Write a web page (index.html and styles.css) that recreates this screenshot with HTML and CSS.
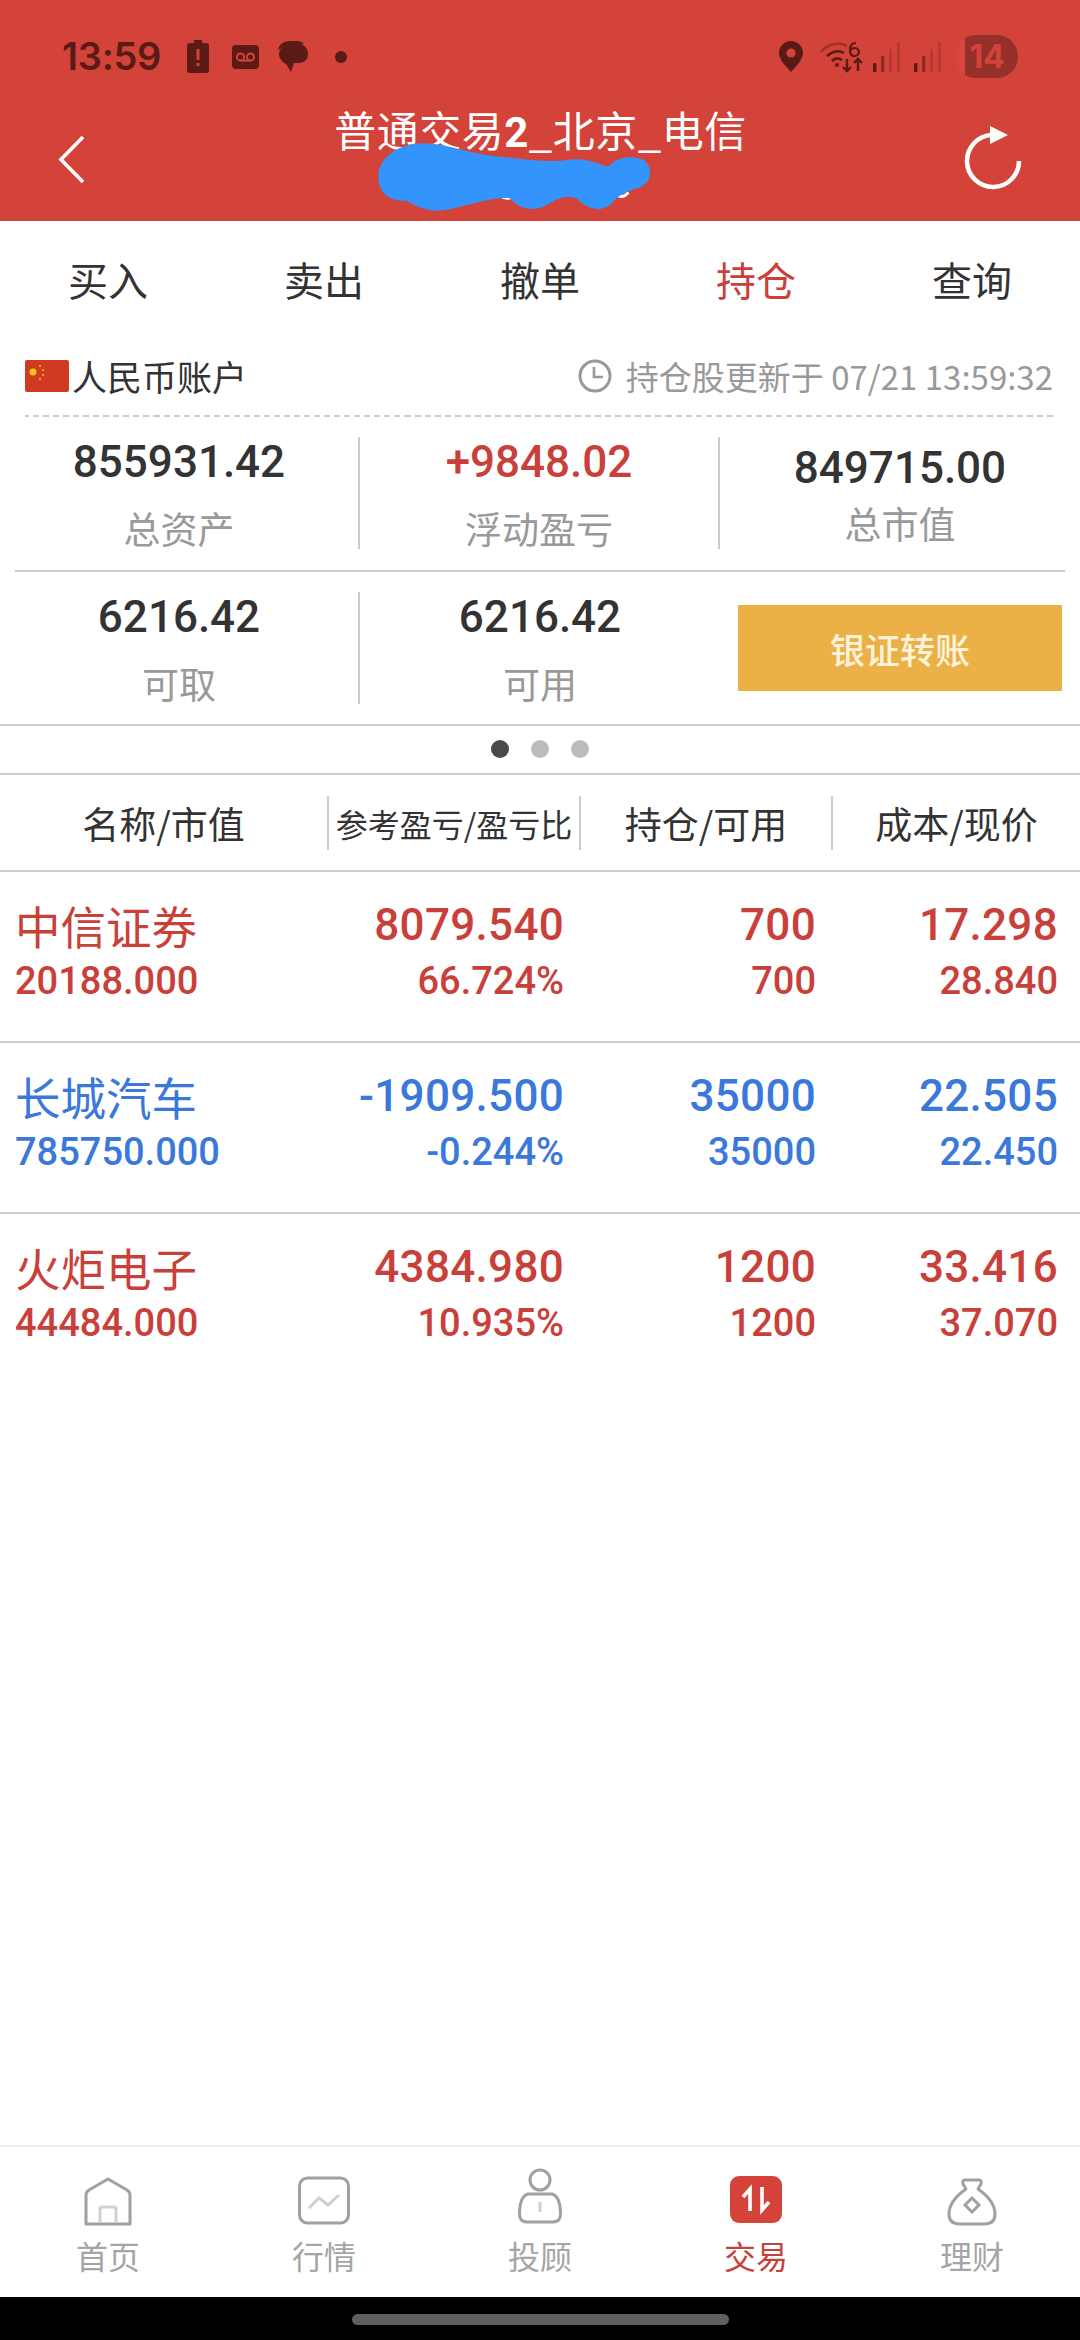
FILE: index.html
```html
<!DOCTYPE html>
<html lang="zh">
<head>
<meta charset="utf-8">
<title>持仓</title>
<link rel="stylesheet" href="styles.css">
</head>
<body>
<div class="app">
  <header class="top">
    <div class="status">
      <div class="status-left">
        <span class="time">13:59</span>
        <svg class="i-batt" viewBox="0 0 22 33"><path d="M7 0h8v3h4a3 3 0 0 1 3 3v24a3 3 0 0 1-3 3H3a3 3 0 0 1-3-3V6a3 3 0 0 1 3-3h4z" fill="#5a1a15"/><rect x="9.500" y="9" width="3" height="11" fill="#d34339"/><rect x="9.500" y="23" width="3" height="3" fill="#d34339"/></svg>
        <svg class="i-vm" viewBox="0 0 27 24"><rect width="27" height="24" rx="4" fill="#5a1a15"/><circle cx="8.500" cy="12" r="3.600" fill="none" stroke="#d34339" stroke-width="2"/><circle cx="18.500" cy="12" r="3.600" fill="none" stroke="#d34339" stroke-width="2"/><rect x="8.500" y="14.600" width="10" height="2" fill="#d34339"/></svg>
        <svg class="i-chat" viewBox="0 0 31 31"><path d="M1 9C2 3 7 0 14 0h6c3 0 5 1 7 3L8 5z" fill="#5a1a15"/><path d="M14 3h7c6 0 10 4 10 10s-4 9-10 9h-4l-3 9-5-8C5 21 2 17 2 13 2 7 8 3 14 3z" fill="#5a1a15"/></svg>
        <span class="dot-s"></span>
      </div>
      <div class="status-right">
        <svg class="i-pin" viewBox="0 0 24 31"><path d="M12 0a12 12 0 0 1 12 12c0 7-7 13-12 19C7 25 0 19 0 12A12 12 0 0 1 12 0z" fill="#5a1a15"/><circle cx="12" cy="12" r="4.600" fill="#d34339"/></svg>
        <svg class="i-wifi" viewBox="0 0 44 32"><path d="M1 11C8 2 20 1 27 5" fill="none" stroke="#a53028" stroke-width="2.600"/><path d="M7 15c5-5 12-6 17-3" fill="none" stroke="#5a1a15" stroke-width="2.600"/><path d="M12 20c3-3 7-3 10-1" fill="none" stroke="#5a1a15" stroke-width="2.600"/><circle cx="17" cy="24" r="2" fill="#5a1a15"/><path d="M27 18v12m-4-4 4 4 4-4M38 30V18m-4 4 4-4 4 4" fill="none" stroke="#5a1a15" stroke-width="2.400"/><path d="M36 2c-4 0-6 3-6 7s1 6 4 6 5-2 5-4-2-4-4-4-4 1-5 3" fill="none" stroke="#5a1a15" stroke-width="2.200"/></svg>
        <svg class="i-sig" viewBox="0 0 27 30"><rect x="0" y="21" width="3.400" height="9" rx="1" fill="#5a1a15"/><rect x="8" y="14" width="3.400" height="16" rx="1" fill="#8c2a23"/><rect x="16" y="7" width="3" height="23" fill="#b53a31"/><rect x="24" y="0" width="3" height="30" fill="#b53a31"/></svg>
        <svg class="i-sig" viewBox="0 0 27 30"><rect x="0" y="21" width="3.400" height="9" rx="1" fill="#5a1a15"/><rect x="8" y="14" width="3.400" height="16" rx="1" fill="#8c2a23"/><rect x="16" y="7" width="3" height="23" fill="#b53a31"/><rect x="24" y="0" width="3" height="30" fill="#b53a31"/></svg>
        <span class="badge">14</span>
      </div>
    </div>
    <div class="titlebar">
      <svg class="i-back" viewBox="0 0 27 49"><path d="M25 2 3 24.500 25 47" fill="none" stroke="#fff" stroke-width="3.600"/></svg>
      <div class="title">普通交易<b>2</b>_北京_电信</div>
      <svg class="i-refresh" viewBox="0 0 60 66"><path d="M29 9A26 26 0 1 0 56 35" fill="none" stroke="#fff" stroke-width="4.500"/><path d="M27 0 45 9 27 18z" fill="#fff"/></svg>
    </div>
    <svg class="scribble" viewBox="0 0 960 330"><path d="M420 258q20 12 40 2M770 255q20 12 35-8" fill="none" stroke="#fff" stroke-width="9"/><path d="M55 200C55 140 120 100 190 100 260 100 320 130 400 138 480 145 560 160 620 150 680 140 720 165 745 170 770 140 820 135 850 150 880 170 880 220 830 235 800 245 770 260 760 275 730 310 680 300 650 265 620 255 590 265 560 285 520 305 480 300 450 265 400 260 330 285 270 298 210 310 170 290 140 272 90 275 55 250 55 200Z" fill="#3394fb"/></svg>
  </header>

  <nav class="tabs">
    <span class="tab">买入</span>
    <span class="tab">卖出</span>
    <span class="tab">撤单</span>
    <span class="tab tab-on">持仓</span>
    <span class="tab">查询</span>
  </nav>

  <section class="account">
    <div class="acc-left">
      <svg class="flag" viewBox="0 0 44 32"><rect width="44" height="32" rx="2" fill="#d03a20"/><circle cx="8" cy="12" r="3.500" fill="#f5c518"/><circle cx="15" cy="6" r="1" fill="#f5c518"/><circle cx="18" cy="10" r="1" fill="#f5c518"/><circle cx="18" cy="15" r="1" fill="#f5c518"/><circle cx="15" cy="19" r="1" fill="#f5c518"/></svg>
      <span>人民币账户</span>
    </div>
    <div class="acc-right">
      <svg class="clock" viewBox="0 0 34 34"><circle cx="17" cy="17" r="15" fill="none" stroke="#999" stroke-width="3"/><path d="M16 8v10h9" fill="none" stroke="#999" stroke-width="2.600"/></svg>
      <span>持仓股更新于 07/21 13:59:32</span>
    </div>
  </section>

  <section class="stats">
    <div class="stat-row">
      <div class="cell cell-line"><span class="num">855931.42</span><span class="lab">总资产</span></div>
      <div class="cell cell-line"><span class="num up">+9848.02</span><span class="lab">浮动盈亏</span></div>
      <div class="cell cell-tight"><span class="num">849715.00</span><span class="lab">总市值</span></div>
    </div>
    <div class="rule"></div>
    <div class="stat-row">
      <div class="cell cell-line"><span class="num">6216.42</span><span class="lab">可取</span></div>
      <div class="cell"><span class="num">6216.42</span><span class="lab">可用</span></div>
      <div class="cell cell-btn"><span class="btn">银证转账</span></div>
    </div>
  </section>

  <div class="dots"><i class="d d-on"></i><i class="d"></i><i class="d"></i></div>

  <div class="thead">
    <span class="th th-line">名称/市值</span>
    <span class="th th-line th-sm">参考盈亏/盈亏比</span>
    <span class="th th-line">持仓/可用</span>
    <span class="th">成本/现价</span>
  </div>

  <div class="row up">
    <div class="c c-name"><span class="big cjk">中信证券</span><span class="small">20188.000</span></div>
    <div class="c c2"><span class="big">8079.540</span><span class="small">66.724%</span></div>
    <div class="c c3"><span class="big">700</span><span class="small">700</span></div>
    <div class="c c4"><span class="big">17.298</span><span class="small">28.840</span></div>
  </div>
  <div class="row down">
    <div class="c c-name"><span class="big cjk">长城汽车</span><span class="small">785750.000</span></div>
    <div class="c c2"><span class="big">-1909.500</span><span class="small">-0.244%</span></div>
    <div class="c c3"><span class="big">35000</span><span class="small">35000</span></div>
    <div class="c c4"><span class="big">22.505</span><span class="small">22.450</span></div>
  </div>
  <div class="row up row-last">
    <div class="c c-name"><span class="big cjk">火炬电子</span><span class="small">44484.000</span></div>
    <div class="c c2"><span class="big">4384.980</span><span class="small">10.935%</span></div>
    <div class="c c3"><span class="big">1200</span><span class="small">1200</span></div>
    <div class="c c4"><span class="big">33.416</span><span class="small">37.070</span></div>
  </div>

  <div class="spacer"></div>

  <footer class="nav">
    <div class="nav-item">
      <svg class="nav-ic" viewBox="0 0 52 52"><path d="M4 49V20q0-3 3-5L26 4l19 11q3 2 3 5v29z" fill="none" stroke="#a0a0a0" stroke-width="3" stroke-linejoin="round"/><path d="M18 48V34q0-2 2-2h12q2 0 2 2v14" fill="none" stroke="#d2d2d2" stroke-width="3"/></svg>
      <span>首页</span>
    </div>
    <div class="nav-item">
      <svg class="nav-ic" viewBox="0 0 52 52"><rect x="1.500" y="3" width="49" height="45" rx="8" fill="none" stroke="#a0a0a0" stroke-width="3"/><path d="M11 33l10-10 9 7 11-10" fill="none" stroke="#cfcfcf" stroke-width="3"/></svg>
      <span>行情</span>
    </div>
    <div class="nav-item">
      <svg class="nav-ic" viewBox="0 0 52 52"><circle cx="26" cy="5" r="10" fill="none" stroke="#a0a0a0" stroke-width="3"/><path d="M14 19H38Q46 21 46.500 38 47 47 39 47H13Q5 47 5.500 38 6 21 14 19Z" fill="#fff" stroke="#a0a0a0" stroke-width="3"/><path d="M26 27v10" stroke="#cfcfcf" stroke-width="3"/></svg>
      <span>投顾</span>
    </div>
    <div class="nav-item nav-on">
      <svg class="nav-ic" viewBox="0 0 52 52"><rect y="1" width="52" height="47" rx="9" fill="#d4423a"/><path d="M20 36V14l-7 8M32 12v23l7-8" fill="none" stroke="#fff" stroke-width="3.600"/></svg>
      <span>交易</span>
    </div>
    <div class="nav-item">
      <svg class="nav-ic" viewBox="0 0 52 52"><path d="M19 5h14q3 0 2 4l-3 5q17 12 17 25 0 10-11 10H14Q3 49 3 39q0-13 17-25l-3-5q-1-4 2-4z" fill="none" stroke="#a0a0a0" stroke-width="3" stroke-linejoin="round"/><path d="M26 23l7 7-7 7-7-7z" fill="none" stroke="#a0a0a0" stroke-width="3"/></svg>
      <span>理财</span>
    </div>
  </footer>
  <div class="gesture"><span class="pill"></span></div>
</div>
</body>
</html>
```
FILE: styles.css
```css
* { box-sizing: border-box; }
html, body { margin: 0; padding: 0; background: #fff; }
body { font-family: "Noto Sans CJK SC", "Noto Sans", sans-serif; color: #333; }
.app { width: 1080px; height: 2340px; display: flex; flex-direction: column; overflow: hidden; }

.top { position: relative; height: 221px; background: #d34339; flex: none; }
.status { height: 112px; padding: 35px 62px 0 62px; display: flex; justify-content: space-between; align-items: flex-start; }
.status-left, .status-right { display: flex; align-items: center; height: 43px; }
.time { font: 600 38px/43px Inter, Roboto, sans-serif; color: #5a1a15; width: 125px; letter-spacing: -.3px; }
.i-batt { width: 22px; height: 33px; margin-right: 23px; }
.i-vm { width: 27px; height: 24px; margin-right: 18px; }
.i-chat { width: 31px; height: 31px; margin-right: 27px; }
.dot-s { width: 12px; height: 12px; border-radius: 50%; background: #5a1a15; }
.i-pin { width: 24px; height: 31px; margin-right: 17px; }
.i-wifi { width: 44px; height: 32px; margin-right: 9px; }
.i-sig { width: 27px; height: 30px; margin-right: 14px; }
.badge { width: 63px; height: 43px; border-radius: 21px; background: linear-gradient(90deg, #d9473c 10px, #96302a 10px); color: #d34339; font: 700 32px/43px Inter, Roboto, sans-serif; text-align: right; padding-right: 13px; }
.titlebar { height: 109px; display: grid; grid-template-columns: 1fr auto 1fr; align-items: start; padding: 0 57px 0 58px; }
.i-back { width: 27px; height: 49px; margin-top: 23px; }
.i-refresh { width: 60px; height: 66px; margin-top: 14px; justify-self: end; }
.title { color: #fff; font-size: 42px; line-height: 50px; margin-top: -8px; letter-spacing: .5px; }
.title b { font: 700 42px/50px Roboto, sans-serif; }
.scribble { position: absolute; left: 360px; top: 110px; width: 320px; height: 110px; }

.tabs { flex: none; height: 122px; padding-bottom: 6px; display: grid; grid-template-columns: repeat(5, 1fr); align-items: center; text-align: center; font-size: 40px; color: #333; }
.tab-on { color: #c9403a; }

.account { flex: none; height: 74px; margin: 0 27px 0 25px; padding-bottom: 7px; display: flex; justify-content: space-between; align-items: center; border-bottom: 2px dashed #ccc; border-image: repeating-linear-gradient(90deg, #ccc 0 6px, transparent 6px 10px) 2; }
.acc-left { display: flex; align-items: center; font-size: 35px; gap: 3px; color: #333; }
.flag { width: 44px; height: 32px; }
.acc-right { display: flex; align-items: center; gap: 14px; font-size: 33px; color: #999; }
.clock { width: 34px; height: 34px; }

.stats { flex: none; }
.stat-row { height: 154px; padding: 20px 0; display: grid; grid-template-columns: 360px 360px 360px; border-bottom: 2px solid #ccc; }
.stat-row:first-child { border-bottom: none; height: 153px; }
.rule { height: 2px; margin: 0 15px; background: #ccc; }
.cell { display: flex; flex-direction: column; align-items: center; height: 112px; }
.cell-line { border-right: 2px solid #ccc; }
.num { font: 500 44px/50px Roboto, sans-serif; color: #333; }
.num.up { color: #c9403a; }
.lab { font-size: 37px; line-height: 50px; color: #999; margin-top: 16px; }
.cell-tight { padding-top: 6px; }
.cell-tight .lab { margin-top: 5px; }
.cell-btn { justify-content: center; align-items: flex-start; padding-left: 18px; }
.btn { width: 324px; height: 86px; display: flex; align-items: center; justify-content: center; background: #ecb146; color: #fdf3dc; font-size: 35px; font-weight: 500; }

.dots { flex: none; height: 49px; padding-bottom: 2px; display: flex; justify-content: center; align-items: center; gap: 22px; border-bottom: 2px solid #ccc; }
.d { width: 18px; height: 18px; border-radius: 50%; background: #bbb; }
.d-on { background: #4a4a4a; }

.thead, .row { display: grid; grid-template-columns: 329px 252px 252px 247px; }
.thead { flex: none; height: 97px; padding: 21px 0 25px; border-bottom: 2px solid #ccc; font-size: 37px; color: #333; }
.th { display: flex; align-items: center; justify-content: center; white-space: nowrap; }
.th-line { border-right: 2px solid #ccc; }
.th-sm { font-size: 32px; }

.row { flex: none; height: 171px; padding-top: 24px; border-bottom: 2px solid #ccc; }
.row-last { border-bottom: none; }
.up { color: #c9403a; }
.down { color: #3a78dc; }
.c { display: flex; flex-direction: column; align-items: flex-end; padding-right: 17px; }
.c-name { align-items: flex-start; padding: 0 0 0 15px; }
.c4 { padding-right: 22px; }
.big { font: 500 44px/58px Roboto, sans-serif; letter-spacing: .3px; }
.big.cjk { font: 400 45.500px/58px "Noto Sans CJK SC", sans-serif; letter-spacing: 0; }
.small { font: 500 38px/50px Roboto, sans-serif; margin-top: 2px; }

.spacer { flex: 1; }
.nav { flex: none; height: 152px; display: grid; grid-template-columns: repeat(5, 1fr); padding-top: 28px; border-top: 2px solid #f0f0f0; }
.nav-item { display: flex; flex-direction: column; align-items: center; color: #a5a5a5; font-size: 32px; line-height: 46px; }
.nav-ic { width: 52px; height: 52px; margin-bottom: 5px; overflow: visible; }
.nav-on { color: #c9403a; }
.gesture { flex: none; height: 43px; background: #000; display: flex; justify-content: center; padding-top: 17px; }
.pill { width: 377px; height: 11px; border-radius: 6px; background: #5f5f5f; }
```
